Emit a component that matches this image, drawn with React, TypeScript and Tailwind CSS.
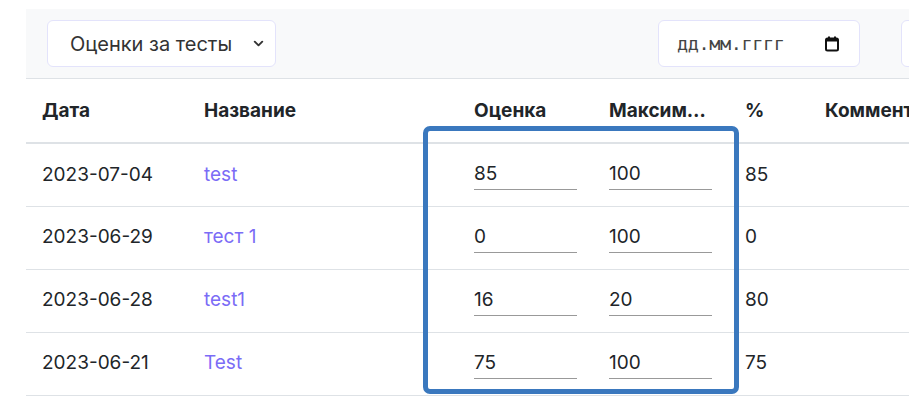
import { ChevronDown } from "lucide-react";

interface GradeRow {
  date: string;
  title: string;
  score: string;
  max: string;
  percent: string;
}

const rows: GradeRow[] = [
  { date: "2023-07-04", title: "test", score: "85", max: "100", percent: "85" },
  { date: "2023-06-29", title: "тест 1", score: "0", max: "100", percent: "0" },
  { date: "2023-06-28", title: "test1", score: "16", max: "20", percent: "80" },
  { date: "2023-06-21", title: "Test", score: "75", max: "100", percent: "75" },
];

function CalendarIcon() {
  return (
    <svg width="14" height="16" viewBox="0 0 14 16" fill="none">
      <rect x="1" y="2.5" width="12" height="12" rx="1.5" stroke="#111" strokeWidth="2" />
      <rect x="1" y="2.5" width="12" height="3" fill="#111" />
      <rect x="3" y="0.5" width="2" height="3" fill="#111" />
      <rect x="9" y="0.5" width="2" height="3" fill="#111" />
    </svg>
  );
}

function GradeInput({ value }: { value: string }) {
  return (
    <div className="w-[103px] border-b border-[#999] pb-[2px] leading-[26px]">{value}</div>
  );
}

export default function App() {
  return (
    <div
      className="relative h-[399px] w-[909px] overflow-hidden bg-white pl-[26px] pt-[9px] text-[19px] text-[#212529]"
      style={{ fontFamily: "Inter, 'Noto Sans', sans-serif" }}
    >
      <div className="flex h-[70px] items-center border-b border-[#dee2e6] bg-[#f8f9fa] pl-[21px]">
        <div className="flex h-[47px] w-[229px] shrink-0 items-center justify-between whitespace-nowrap rounded-md border border-[#e3e3fb] bg-white pl-[22px] pr-[9px] text-[20px] text-[#333]">
          <span>Оценки за тесты</span>
          <ChevronDown size={15} strokeWidth={3} className="text-[#333]" />
        </div>
        <div className="ml-[382px] flex h-[47px] w-[202px] shrink-0 items-center justify-between rounded-md border border-[#e3e3fb] bg-white pl-[18px] pr-[20px]">
          <span className="text-[18.5px] text-[#444]" style={{ fontFamily: "'DejaVu Sans Mono', monospace", letterSpacing: "-0.4px" }}>
            дд.мм.гггг
          </span>
          <CalendarIcon />
        </div>
        <div className="ml-[41px] h-[47px] w-[100px] shrink-0 rounded-md border border-[#e3e3fb] bg-white" />
      </div>

      <table className="w-[1000px] table-fixed border-collapse text-left">
        <colgroup>
          <col className="w-[162px]" />
          <col className="w-[270px]" />
          <col className="w-[135px]" />
          <col className="w-[136px]" />
          <col className="w-[80px]" />
          <col />
        </colgroup>
        <thead>
          <tr className="h-[64px] border-b-2 border-[#dee2e6] font-bold">
            <th className="px-4 pt-[2px]">Дата</th>
            <th className="px-4 pt-[2px]">Название</th>
            <th className="px-4 pt-[2px]">Оценка</th>
            <th className="px-4 pt-[2px]">Максим…</th>
            <th className="px-4 pt-[2px]">%</th>
            <th className="px-4 pt-[2px] whitespace-nowrap">Комментарий</th>
          </tr>
        </thead>
        <tbody>
          {rows.map((r) => (
            <tr key={r.date} className="h-[63px] border-b border-[#dee2e6]">
              <td className="px-4">{r.date}</td>
              <td className="px-4 text-[#7b6cf6]">{r.title}</td>
              <td className="px-4 pt-[2px]">
                <GradeInput value={r.score} />
              </td>
              <td className="px-4 pt-[2px]">
                <GradeInput value={r.max} />
              </td>
              <td className="px-4">{r.percent}</td>
              <td className="px-4" />
            </tr>
          ))}
        </tbody>
      </table>

      <div className="pointer-events-none absolute left-[423px] top-[126px] h-[268px] w-[316px] rounded-[7px] border-[5px] border-[#3a78be]" />
    </div>
  );
}
